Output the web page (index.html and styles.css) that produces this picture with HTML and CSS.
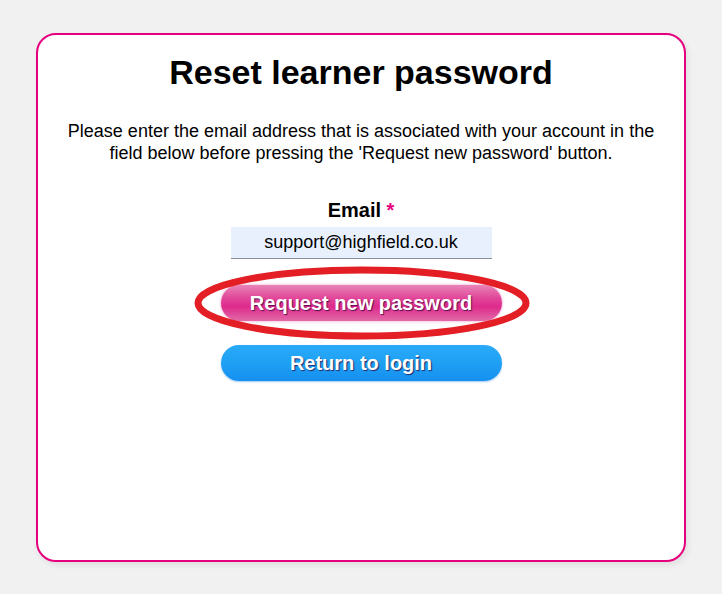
FILE: index.html
```html
<!DOCTYPE html>
<html lang="en">
<head>
<meta charset="utf-8">
<title>Reset learner password</title>
<link rel="stylesheet" href="styles.css">
</head>
<body>
<main class="card">
  <h1 class="title">Reset learner password</h1>
  <p class="intro">Please enter the email address that is associated with your account in the field below before pressing the 'Request new password' button.</p>
  <form class="form">
    <label class="label" for="email">Email <span class="req">*</span></label>
    <input class="input" id="email" type="text" value="support@highfield.co.uk">
    <div class="btn-wrap">
      <button type="button" class="btn btn-pink">Request new password</button>
      <svg class="ring" width="340" height="76" viewBox="0 0 340 76" aria-hidden="true">
        <ellipse cx="168" cy="37" rx="164" ry="33" fill="none" stroke="#e31e24" stroke-width="7"/>
      </svg>
    </div>
    <button type="button" class="btn btn-blue">Return to login</button>
  </form>
</main>
</body>
</html>
```
FILE: styles.css
```css
html, body {
  margin: 0;
  padding: 0;
}
body {
  background: #f1f1f1;
  font-family: "Liberation Sans", Arial, sans-serif;
  color: #000;
  padding: 33px 36px 0 36px;
  height: 594px;
  box-sizing: border-box;
}
.card {
  width: 650px;
  height: 529px;
  box-sizing: border-box;
  background: #fff;
  border: 2px solid #e6007e;
  border-radius: 20px;
  box-shadow: 2px 3px 6px rgba(0,0,0,0.08);
  display: flex;
  flex-direction: column;
  align-items: center;
  padding-top: 17px;
}
.title {
  margin: 0;
  font-size: 34px;
  font-weight: bold;
  line-height: 40px;
}
.intro {
  margin: 28px 0 0 0;
  width: 600px;
  text-align: center;
  font-size: 18px;
  line-height: 22px;
}
.form {
  display: flex;
  flex-direction: column;
  align-items: center;
  margin-top: 35px;
}
.label {
  font-weight: bold;
  font-size: 20px;
  line-height: 22px;
}
.req {
  color: #e6007e;
}
.input {
  margin-top: 6px;
  width: 261px;
  height: 32px;
  box-sizing: border-box;
  border: none;
  border-bottom: 1px solid #8a8f99;
  background: #e8f0fe;
  text-align: center;
  font-family: "Liberation Sans", Arial, sans-serif;
  font-size: 18px;
  color: #000;
  padding: 0;
}
.btn-wrap {
  position: relative;
  margin-top: 26px;
}
.btn {
  width: 281px;
  height: 36px;
  border: none;
  border-radius: 18px;
  color: #fff;
  font-family: "Liberation Sans", Arial, sans-serif;
  font-weight: bold;
  font-size: 20px;
  text-shadow: 1px 1px 1px rgba(40,0,60,0.75);
  padding: 0;
  display: block;
}
.btn-pink {
  background: linear-gradient(to bottom, #e884b8 0%, #e2489a 35%, #dd2a8b 60%, #e26aa8 100%);
  box-shadow: 0 0 3px rgba(220,40,140,0.5);
}
.btn-blue {
  margin-top: 24px;
  background: linear-gradient(to bottom, #2aaaf8 0%, #1ea0f4 50%, #158ff0 100%);
  box-shadow: 0 1px 2px rgba(20,120,220,0.4);
}
.ring {
  position: absolute;
  left: -27px;
  top: -19px;
  pointer-events: none;
}
```
